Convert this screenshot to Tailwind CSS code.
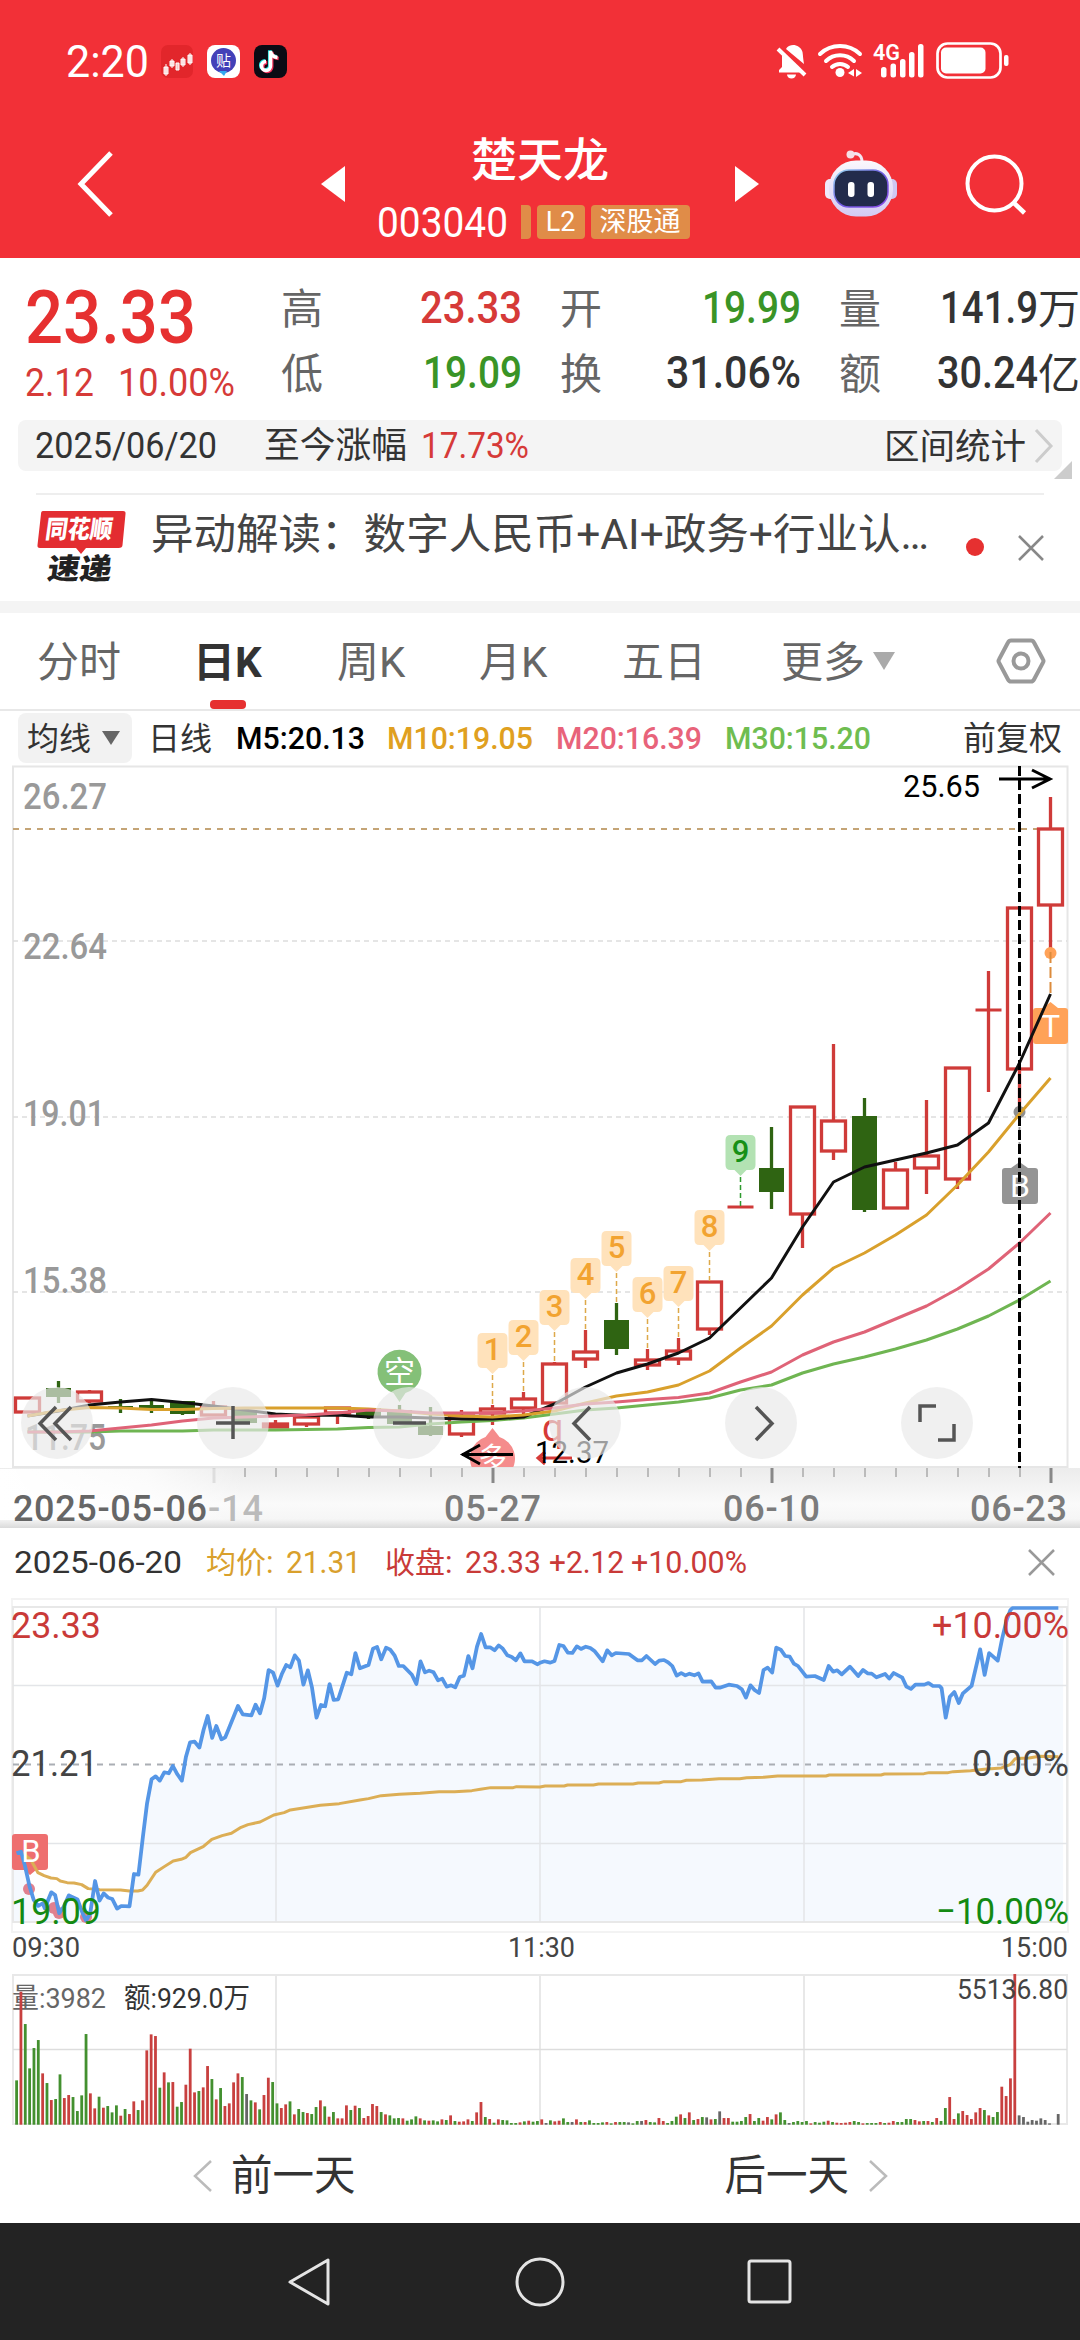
<!DOCTYPE html>
<html lang="zh-CN">
  <head>
    <meta charset="UTF-8" />
    <meta name="viewport" content="width=device-width, initial-scale=1.0" />
    <title>楚天龙 003040</title>
    <script src="https://cdn.jsdelivr.net/npm/@tailwindcss/browser@4"></script>
  </head>
  <body class="w-[1080px] h-[2340px] overflow-hidden flex flex-col bg-white text-[#333] font-['Roboto','Noto_Sans_CJK_SC',sans-serif] leading-none whitespace-nowrap">

    <!-- header -->
    <header class="h-[258px] shrink-0 bg-[#f23037] text-white">
      <div class="h-[122px] flex items-center pl-[66px] pr-[70px]">
        <span class="text-[45px]" data-w="83">2:20</span>
        <svg class="ml-3 w-[32px] h-[33px]" viewBox="0 0 32 33">
          <rect width="32" height="33" rx="7" fill="#e2262b" />
          <path d="M3 22h4v7H3zM9 16h4v5H9zM15 18h3v7h-3zM20 14h4v6h-4zM27 10h4v8h-4zM11 14v9M22 12v10M5 19v12M29 8v12" fill="#f6c9c9" stroke="#fff" stroke-width="1" />
        </svg>
        <svg class="ml-[14px] w-[33px] h-[33px]" viewBox="0 0 33 33">
          <rect width="33" height="33" rx="8" fill="#fff" />
          <circle cx="16.500" cy="15.500" r="12.500" fill="#4340b8" />
          <path d="M12 26l5 5 3-5z" fill="#35a9f0" />
          <text x="16.500" y="21" font-size="15" text-anchor="middle" fill="#fff">贴</text>
        </svg>
        <svg class="ml-[14px] w-[33px] h-[33px]" viewBox="0 0 33 33">
          <rect width="33" height="33" rx="8" fill="#0b0b14" />
          <g fill="none" stroke-width="3.500">
            <path d="M16.500 6v15a4.500 4.500 0 1 1-4.500-4.500M16.500 6c.5 4 3 6 7 6.500" stroke="#25e5e0" transform="translate(-.8 -.8)" />
            <path d="M16.500 6v15a4.500 4.500 0 1 1-4.500-4.500M16.500 6c.5 4 3 6 7 6.500" stroke="#f43059" transform="translate(1.200 1)" />
            <path d="M16.500 6v15a4.500 4.500 0 1 1-4.500-4.500M16.500 6c.5 4 3 6 7 6.500" stroke="#fff" />
          </g>
        </svg>
        <svg class="ml-auto w-[236px] h-[44px]" viewBox="774 38 236 44" fill="#fff">
          <!-- muted bell -->
          <path d="M779 71.500V69l3-3V54l20 17.500zM787 46.500c3-4 13-4 15.500 4.500.6 4 .6 7 1.500 12L786 48z" />
          <path d="M778 48l27 26" stroke="#fff" stroke-width="4" />
          <path d="M787 73.500h9a4.500 4 0 0 1-9 0z" />
          <!-- wifi -->
          <g fill="none" stroke="#fff" stroke-width="4" stroke-linecap="round">
            <path d="M820 53a29 29 0 0 1 40 0M826 60a20 20 0 0 1 28 0M832 66a12 12 0 0 1 16 0" />
          </g>
          <circle cx="840" cy="71.500" r="4.500" />
          <path d="M848 72l6-4v7.500zM856 68v8l6-4z" />
          <text x="873" y="59" font-size="22" font-weight="600" textLength="27" lengthAdjust="spacingAndGlyphs">4G</text>
          <rect x="881" y="66" width="5.500" height="10.500" rx="2.500" />
          <rect x="890.500" y="62.500" width="5.500" height="14" rx="2.500" />
          <rect x="900" y="58" width="5.500" height="18.500" rx="2.500" />
          <rect x="909" y="51" width="5.500" height="25.500" rx="2.500" />
          <rect x="918" y="43" width="5.500" height="33.500" rx="2.500" />
          <rect x="937.500" y="42.500" width="63" height="34" rx="10" fill="none" stroke="#fff" stroke-width="2.700" />
          <rect x="941" y="46.500" width="44.500" height="26" rx="5" />
          <rect x="1004" y="54" width="4.500" height="11" rx="2" />
        </svg>
      </div>
      <div class="h-[124px] flex items-center">
        <svg class="ml-[74px] w-[40px] h-[66px]" viewBox="0 0 40 66" fill="none" stroke="#fff" stroke-width="5"><path d="M37 2L7 33l30 31" /></svg>
        <svg class="ml-[207px] w-[24px] h-[36px]" viewBox="0 0 24 36" fill="#fff"><path d="M24 0v36L0 18z" /></svg>
        <div class="w-[390px] pt-[6px] flex flex-col items-center">
          <h1 class="text-[46px] h-[46px] mt-[2px] mb-[22px] font-medium">楚天龙</h1>
          <div class="h-[34px] flex items-center pr-[14px]">
            <span class="text-[42px] mr-[13px]" data-w="131">003040</span>
            <span class="w-[10px] h-[34px] bg-[#e08c48] rounded-r"></span>
            <span class="ml-[6px] h-[34px] w-[48px] bg-[#e08c48] rounded flex items-center justify-center text-[27px]">L2</span>
            <span class="ml-[6px] h-[34px] w-[99px] bg-[#e08c48] rounded flex items-center justify-center text-[27px]">深股通</span>
          </div>
        </div>
        <svg class="w-[24px] h-[36px]" viewBox="0 0 24 36" fill="#fff"><path d="M0 0v36l24-18z" /></svg>
        <svg class="ml-[63px] w-[78px] h-[70px]" viewBox="822 148 78 70">
          <defs>
            <linearGradient id="shell" x1="0" y1="0" x2="0" y2="1"><stop offset="0" stop-color="#fbf8fd" /><stop offset="1" stop-color="#d3caf3" /></linearGradient>
            <linearGradient id="rim" x1="0" y1="0" x2="1" y2="1"><stop offset="0" stop-color="#9adcf3" /><stop offset=".5" stop-color="#6f5be0" /><stop offset="1" stop-color="#8a4be8" /></linearGradient>
          </defs>
          <path d="M851 154c5-3 11-1 11 7" fill="none" stroke="#f3e6f2" stroke-width="3" />
          <circle cx="850.500" cy="153.500" r="4" fill="#f6dfe6" />
          <rect x="825" y="178" width="12" height="20" rx="5" fill="#efe9fb" />
          <rect x="885" y="178" width="12" height="20" rx="5" fill="#cfc8f2" />
          <rect x="829" y="159.500" width="64" height="56" rx="27" fill="url(#shell)" />
          <rect x="834" y="169" width="54" height="37" rx="15" fill="#222b4b" stroke="url(#rim)" stroke-width="1.500" />
          <rect x="848" y="181" width="6.500" height="15" rx="3" fill="#fff" />
          <rect x="867.500" y="181" width="6.500" height="15" rx="3" fill="#fff" />
        </svg>
        <svg class="ml-[64px] w-[64px] h-[64px]" viewBox="964 153 64 64" fill="none" stroke="#fff" stroke-width="4"><circle cx="994.500" cy="184.500" r="27" /><path d="M1013 203l11.500 11" stroke-width="4.500" /></svg>
      </div>
    </header>

    <!-- quote -->
    <section class="h-[162px] shrink-0 flex">
      <div class="w-[281px] shrink-0 pl-[25px] pt-[22px]">
        <div class="text-[75px] h-[76px] font-medium text-[#e63030]" data-w="171">23.33</div>
        <div class="mt-[7px] flex text-[39px] text-[#d63a38]">
          <span class="mr-[24px]" data-w="69">2.12</span>
          <span data-w="117">10.00%</span>
        </div>
      </div>
      <div class="flex gap-[38px] pt-[17px] text-[45px] font-medium">
        <div class="w-[241px]">
          <div class="h-[65px] flex items-center justify-between"><span class="text-[42px] font-normal text-[#666] mt-1">高</span><span class="text-[#d63a38]" data-w="102">23.33</span></div>
          <div class="h-[65px] flex items-center justify-between"><span class="text-[42px] font-normal text-[#666] mt-1">低</span><span class="text-[#3a9426]" data-w="99">19.09</span></div>
        </div>
        <div class="w-[241px]">
          <div class="h-[65px] flex items-center justify-between"><span class="text-[42px] font-normal text-[#666] mt-1">开</span><span class="text-[#3a9426]" data-w="99">19.99</span></div>
          <div class="h-[65px] flex items-center justify-between"><span class="text-[42px] font-normal text-[#666] mt-1">换</span><span data-w="135">31.06%</span></div>
        </div>
        <div class="w-[241px]">
          <div class="h-[65px] flex items-center justify-between"><span class="text-[42px] font-normal text-[#666] mt-1">量</span><span class="flex items-center"><span data-w="98">141.9</span><span class="text-[42px] font-normal mt-1">万</span></span></div>
          <div class="h-[65px] flex items-center justify-between"><span class="text-[42px] font-normal text-[#666] mt-1">额</span><span class="flex items-center"><span data-w="101">30.24</span><span class="text-[42px] font-normal mt-1">亿</span></span></div>
        </div>
      </div>
    </section>

    <!-- range strip -->
    <section class="relative h-[51px] shrink-0 mx-[18px] pl-[17px] pr-[8px] rounded-lg bg-[#f4f4f4] flex items-center text-[36px]">
      <span data-w="182">2025/06/20</span>
      <span class="ml-[47px]" data-w="143">至今涨幅</span>
      <span class="ml-[14px] text-[#d63a38]" data-w="108">17.73%</span>
      <span class="ml-auto text-[35.500px] mr-[8px] mt-1">区间统计</span>
      <svg class="w-[20px] h-[36px]" viewBox="0 0 20 36" fill="none" stroke="#ccc" stroke-width="3"><path d="M2 2l15 16L2 34" /></svg>
      <svg class="absolute -right-[10px] -bottom-[8px] w-[18px] h-[18px]" viewBox="0 0 18 18" fill="#ccc"><path d="M18 0v18H0z" /></svg>
    </section>

    <!-- news -->
    <section class="h-[108px] shrink-0 mx-[36px] mt-[22px] border-t-2 border-[#eee] flex">
      <svg class="w-[92px] h-[76px] mt-[15px]" viewBox="36 510 92 76">
        <path d="M43 511h80q3 0 2.500 3l-3 31q0 3-4 3H86l-5 6-5-6H40q-3 0-2.500-3l3.500-31q0-3 2-3z" fill="#e32d31" />
        <g font-weight="900" transform="skewX(-8)">
          <text x="120" y="538" font-size="25" textLength="67" lengthAdjust="spacingAndGlyphs" fill="#fff">同花顺</text>
          <text x="128" y="579" font-size="29" textLength="64" lengthAdjust="spacingAndGlyphs" fill="#222">速递</text>
        </g>
      </svg>
      <p class="ml-[23px] mt-[18px] w-[780px] text-[42px] text-[#444]" data-w="778">异动解读：数字人民币+AI+政务+行业认…</p>
      <span class="mt-[43px] ml-[35px] w-[18px] h-[18px] rounded-full bg-[#e63030]"></span>
      <svg class="mt-[40px] ml-auto w-[26px] h-[26px]" viewBox="0 0 26 26" stroke="#888" stroke-width="2.500"><path d="M1 1l24 24M25 1L1 25" /></svg>
    </section>
    <div class="h-[12px] shrink-0 bg-[#f4f4f4]"></div>

    <!-- tabs -->
    <nav class="h-[98px] shrink-0 border-b-2 border-[#e8e8e8] pl-[37px] pr-[34px] flex items-center text-[42px] text-[#666]">
      <span class="w-[156px] mt-1">分时</span>
      <span class="w-[144px] relative h-full flex items-center font-bold text-[#333]"><span class="mt-1">日K</span><i class="absolute left-[17px] bottom-0 w-[36px] h-[9px] rounded bg-[#e63030]"></i></span>
      <span class="w-[142px] mt-1">周K</span>
      <span class="w-[143px] mt-1">月K</span>
      <span class="w-[159px] mt-1">五日</span>
      <span class="mt-1">更多</span>
      <svg class="ml-[8px] w-[22px] h-[18px]" viewBox="0 0 22 18" fill="#aaa"><path d="M0 0h22L11 18z" /></svg>
      <svg class="ml-auto w-[50px] h-[46px]" viewBox="0 0 50 46" fill="none" stroke="#999" stroke-width="4"><path d="M15 2.500h20q2 0 3 2l9 17q1 1.500 0 3l-9 17q-1 2-3 2H15q-2 0-3-2l-9-17q-1-1.500 0-3l9-17q1-2 3-2z" /><circle cx="25" cy="23" r="7.500" /></svg>
    </nav>

    <!-- moving averages -->
    <section class="h-[53px] shrink-0 pl-[18px] pr-[18px] flex items-center text-[32px] font-medium">
      <div class="w-[114px] shrink-0 h-[50px] rounded-lg bg-[#f2f2f2] pl-[9px] flex items-center font-normal">
        <span class="mt-0.5">均线</span>
        <svg class="ml-[11px] w-[18px] h-[14px]" viewBox="0 0 18 14" fill="#666"><path d="M0 0h18L9 14z" /></svg>
      </div>
      <span class="ml-[16px] mt-0.5 font-normal">日线</span>
      <span class="ml-[24px] text-black" data-w="129">M5:20.13</span>
      <span class="ml-[22px] text-[#e0a020]" data-w="146">M10:19.05</span>
      <span class="ml-[23px] text-[#e8637a]" data-w="146">M20:16.39</span>
      <span class="ml-[23px] text-[#6fbd50]" data-w="146">M30:15.20</span>
      <span class="ml-auto mt-0.5 font-normal text-[33px]">前复权</span>
    </section>

    <!-- daily K -->
    <svg class="w-[1080px] h-[764px] shrink-0" viewBox="0 764 1080 764">
      <defs>
        <linearGradient id="axis" x1="0" y1="0" x2="0" y2="1"><stop offset="0" stop-color="#ececec" /><stop offset=".6" stop-color="#fafafa" /><stop offset=".85" stop-color="#f6f6f6" /><stop offset="1" stop-color="#dadada" /></linearGradient>
        <linearGradient id="fade"><stop offset="0" stop-color="#fff" /><stop offset=".6" stop-color="#fff" stop-opacity=".75" /><stop offset="1" stop-color="#fff" stop-opacity="0" /></linearGradient>
        <clipPath id="plot"><rect x="13" y="764" width="1067" height="703" /></clipPath>
      </defs>
      <rect y="1468" width="1080" height="60" fill="url(#axis)" />
      <rect x="13" y="766.500" width="1054.500" height="700.500" fill="none" stroke="#e6e6e6" stroke-width="2" />
      <path d="M13 941h1054M13 1117h1054M13 1292h1054" stroke="#ddd" stroke-width="1.300" stroke-dasharray="5 4" />
      <path d="M13 829h1025" stroke="#c4a476" stroke-width="2" stroke-dasharray="6 6" />
      <g fill="#999" font-size="36" font-weight="500">
        <text x="23" y="809" textLength="84" lengthAdjust="spacingAndGlyphs">26.27</text>
        <text x="23" y="959" textLength="84" lengthAdjust="spacingAndGlyphs">22.64</text>
        <text x="23" y="1126" textLength="82" lengthAdjust="spacingAndGlyphs">19.01</text>
        <text x="23" y="1293" textLength="84" lengthAdjust="spacingAndGlyphs">15.38</text>
        <text x="25" y="1450" textLength="81" lengthAdjust="spacingAndGlyphs">11.75</text>
      </g>
      <g id="candles"></g>

      <!-- T / B trade marks -->
      <circle cx="1050.500" cy="953" r="6" fill="#ffa258" />
      <path d="M1050.500 952v45" stroke="#dc8b3c" stroke-width="2" stroke-dasharray="11 4" />
      <path d="M1043 1008l7.500-6 7.500 6h7q3 0 3 3v30q0 3-3 3h-29q-3 0-3-3v-30q0-3 3-3z" fill="#ffa258" />
      <text x="1050.500" y="1037" font-size="32" text-anchor="middle" fill="#fff">T</text>
      <circle cx="1019.500" cy="1112" r="6" fill="#8f8f8f" />
      <path d="M1019.500 1112v50" stroke="#999" stroke-width="2" stroke-dasharray="11 4" />
      <path d="M1011 1168l8.500-6 8.500 6h7q3 0 3 3v30q0 3-3 3h-30q-3 0-3-3v-30q0-3 3-3z" fill="#949494" />
      <text x="1020" y="1197" font-size="32" text-anchor="middle" fill="#fff">B</text>

      <g id="averages" fill="none" stroke-width="3" stroke-linejoin="round"></g>
      <path d="M1019.500 766v702" stroke="#000" stroke-width="3" stroke-dasharray="10 4" />
      <text x="903" y="797" font-size="31" fill="#000" textLength="77" lengthAdjust="spacingAndGlyphs">25.65</text>
      <path d="M999 779h50M1032 770l18 9-18 9" fill="none" stroke="#000" stroke-width="3" />

      <!-- nine-turn numbers -->
      <g id="turns" font-size="31" font-weight="500" text-anchor="middle"></g>

      <!-- 空 / 多 balloons -->
      <g clip-path="url(#plot)">
        <path d="M399.500 1402l-6-9a22 22 0 1 1 12 0z" fill="#84c078" />
        <text x="399.500" y="1383" font-size="31" text-anchor="middle" fill="#fff">空</text>
        <path d="M492.500 1428l-7 9a22.500 22.500 0 1 0 14 0z" fill="#f58c8c" />
        <text x="492.500" y="1469" font-size="29" text-anchor="middle" fill="#fff">多</text>
        <path d="M513 1454.500h-51M480 1445l-17 9.500 17 9.500" fill="none" stroke="#000" stroke-width="3" />
        <text x="542" y="1441" font-size="38" fill="#d63a38">q</text>
        <path d="M572 1458h-34M545 1452l-7 6 7 6" fill="none" stroke="#d63a38" stroke-width="3" />
        <text x="535" y="1463" font-size="31" fill="#000" textLength="74" lengthAdjust="spacingAndGlyphs">12.37</text>
      </g>

      <!-- floating controls -->
      <g fill="#e9e9e9" fill-opacity=".67">
        <circle cx="57" cy="1423" r="36" />
        <circle cx="233" cy="1423" r="36" />
        <circle cx="409" cy="1423" r="36" />
        <circle cx="585" cy="1423" r="36" />
        <circle cx="761" cy="1423" r="36" />
        <circle cx="937" cy="1423" r="36" />
      </g>
      <g fill="none" stroke="#555" stroke-width="3.500">
        <path d="M56 1407l-16 16.500 16 16.500M71 1407l-16 16.500 16 16.500" />
        <path d="M216 1423h34M233 1406v33M393 1423h33" />
        <path d="M590 1407l-16 16.500 16 16.500M756 1407l16 16.500-16 16.500" />
        <path d="M920 1422v-16h16M954 1424v16h-16" />
      </g>

      <!-- date axis -->
      <g id="ticks"></g>
      <rect y="1469" width="245" height="51" fill="url(#fade)" />
      <g font-size="36" font-weight="500" fill="#7c7c7c">
        <text x="208" y="1521" fill="#bbb" textLength="55" lengthAdjust="spacing">-14</text>
        <text x="13" y="1521" fill="#666" textLength="194" lengthAdjust="spacing">2025-05-06</text>
        <text x="444" y="1521" textLength="97" lengthAdjust="spacing">05-27</text>
        <text x="723" y="1521" textLength="97" lengthAdjust="spacing">06-10</text>
        <text x="970" y="1521" textLength="97" lengthAdjust="spacing">06-23</text>
      </g>
    </svg>

    <!-- intraday -->
    <section class="h-[69px] shrink-0 pl-[14px] pr-[25px] flex items-center text-[31px]">
      <span data-w="168">2025-06-20</span>
      <span class="ml-[24px] flex items-center text-[#d9a02c]"><span class="text-[30px]">均价</span><span class="w-[20px]">:</span><span data-w="75">21.31</span></span>
      <span class="ml-[24px] flex items-center text-[#c93a38]"><span class="text-[30px]">收盘</span><span class="w-[20px]">:</span><span data-w="76">23.33</span><span class="ml-[8px]" data-w="75">+2.12</span><span class="ml-[7px]" data-w="116">+10.00%</span></span>
      <svg class="ml-auto w-[27px] h-[27px]" viewBox="0 0 27 27" stroke="#999" stroke-width="2.500"><path d="M1 1l25 25M26 1L1 26" /></svg>
    </section>

    <svg class="w-[1080px] h-[538px] shrink-0" viewBox="0 1597 1080 538">
      <rect x="12" y="1599" width="1056" height="333" fill="none" stroke="#f3f3f3" stroke-width="2" />
      <path id="area" fill="#f5f9fe" transform="translate(0 1530) scale(.3444 .3333)" />
      <rect x="13" y="1607" width="1054" height="315" fill="none" stroke="#e8e8e8" stroke-width="2" />
      <path d="M13 1685.500h1054M13 1843.500h1054M276 1607v315M540 1607v315M804 1607v315" fill="none" stroke="#e3e5e8" stroke-width="1.500" />
      <path d="M13 1764.500h1054" stroke="#aaaeb4" stroke-width="2" stroke-dasharray="6 6" />
      <path d="M15 1834h30q3 0 3 3v30q0 3-3 3h-9l-6 5-6-5h-9q-3 0-3-3v-30q0-3 3-3z" fill="#ee6f6f" />
      <g fill="#e0808f"><circle cx="29" cy="1889" r="6" /><circle cx="54" cy="1908" r="6" /><circle cx="59" cy="1913" r="6" /><circle cx="86" cy="1917" r="6" /></g>
      <g transform="translate(0 1530) scale(.3444 .3333)" fill="none" stroke-width="11" stroke-linejoin="round">
        <path id="avg" stroke="#dcae55" stroke-width="9" />
        <path id="price" stroke="#5596e6" />
      </g>
      <text x="31" y="1862" font-size="31" text-anchor="middle" fill="#fff">B</text>
      <g font-size="37">
        <text x="11" y="1638" fill="#c93a38" textLength="90" lengthAdjust="spacingAndGlyphs">23.33</text>
        <text x="11" y="1776" fill="#444" textLength="87" lengthAdjust="spacingAndGlyphs">21.21</text>
        <text x="11" y="1924" fill="#138a13" textLength="90" lengthAdjust="spacingAndGlyphs">19.09</text>
        <text x="932" y="1638" fill="#c93a38" textLength="137" lengthAdjust="spacingAndGlyphs">+10.00%</text>
        <text x="972" y="1776" fill="#444" textLength="97" lengthAdjust="spacingAndGlyphs">0.00%</text>
        <text x="936" y="1924" fill="#138a13" textLength="133" lengthAdjust="spacingAndGlyphs">−10.00%</text>
      </g>
      <g font-size="28" fill="#444">
        <text x="12" y="1957" textLength="68" lengthAdjust="spacingAndGlyphs">09:30</text>
        <text x="508" y="1957" textLength="67" lengthAdjust="spacingAndGlyphs">11:30</text>
        <text x="1001" y="1957" textLength="67" lengthAdjust="spacingAndGlyphs">15:00</text>
      </g>
      <path d="M13 1975h1054v149H13zM276 1975v149M540 1975v149M804 1975v149" fill="none" stroke="#e8e8e8" stroke-width="2" />
      <path d="M13 2049.500h1054" stroke="#ddd" stroke-width="1.500" />
      <g font-size="28">
        <text x="12" y="2008" fill="#666" textLength="94" lengthAdjust="spacingAndGlyphs">量:3982</text>
        <text x="124" y="2008" fill="#333" textLength="126" lengthAdjust="spacingAndGlyphs">额:929.0万</text>
      </g>
      <g id="volume"></g>
      <text x="957" y="1999" font-size="28" fill="#444" textLength="111" lengthAdjust="spacingAndGlyphs">55136.80</text>
    </svg>

    <!-- day switch -->
    <section class="h-[88px] shrink-0 pl-[193px] pr-[192px] pb-[7px] flex items-center text-[41.500px]">
      <svg class="w-[20px] h-[34px]" viewBox="0 0 20 34" fill="none" stroke="#bbb" stroke-width="2.500"><path d="M18 2L2 17l16 15" /></svg>
      <span class="ml-[18px]">前一天</span>
      <span class="ml-auto">后一天</span>
      <svg class="ml-[19px] w-[20px] h-[34px]" viewBox="0 0 20 34" fill="none" stroke="#bbb" stroke-width="2.500"><path d="M2 2l16 15L2 32" /></svg>
    </section>

    <!-- system navigation -->
    <footer class="h-[117px] shrink-0 bg-[#232323]">
      <svg class="w-[1080px] h-[117px]" viewBox="0 2223 1080 117" fill="none" stroke="#e4e4e4" stroke-width="3"><path d="M290 2282l38-22v44z" stroke-linejoin="round" /><circle cx="540" cy="2282" r="23" /><rect x="749" y="2261" width="41" height="41" rx="2" /></svg>
    </footer>
  </body>
  <script>
    // squeeze digits to the width of the condensed quote face
    document.querySelectorAll("[data-w]").forEach((el) => {
      const w = el.dataset.w;
      el.innerHTML = `<svg class="block shrink-0 h-[1em] overflow-visible" style="width:${w}px"><text y=".845em" fill="currentColor" textLength="${w}" lengthAdjust="spacingAndGlyphs">${el.textContent}</text></svg>`;
    });

    const RED = "#cf3b39", GREEN = "#2f6412";
    const cx = (i) => 27.5 + 31 * i;

    // type, wick top, body top, body bottom, wick bottom
    const candles = [
      ["r", 1398, 1398, 1412, 1412], ["g", 1381, 1388, 1397, 1403], ["r", 1390, 1392, 1401, 1403],
      ["g", 1399, 1406, 1408, 1413], ["g", 1401, 1405, 1408, 1413], ["g", 1401, 1401, 1414, 1415],
      ["r", 1401, 1407, 1415, 1415], ["g", 1410, 1410, 1423, 1423], ["r", 1420, 1424, 1427, 1428],
      ["r", 1417, 1417, 1424, 1427], ["r", 1407, 1408, 1413, 1424], ["g", 1408, 1408, 1417, 1419],
      ["g", 1405, 1410, 1424, 1424], ["g", 1407, 1426, 1435, 1436], ["r", 1410, 1416, 1434, 1437],
      ["r", 1405, 1409, 1413, 1425], ["r", 1392, 1399, 1408, 1414], ["r", 1362, 1364, 1403, 1403],
      ["r", 1330, 1352, 1359, 1368], ["g", 1303, 1320, 1349, 1355], ["r", 1349, 1360, 1365, 1370],
      ["r", 1338, 1351, 1359, 1365], ["r", 1282, 1282, 1329, 1335], ["d", 1206, 1206, 1208, 1208],
      ["g", 1127, 1168, 1192, 1209], ["r", 1107, 1107, 1214, 1248], ["r", 1044, 1121, 1151, 1160],
      ["g", 1098, 1116, 1210, 1212], ["r", 1162, 1170, 1208, 1208], ["r", 1100, 1156, 1168, 1194],
      ["r", 1068, 1068, 1179, 1189], ["d", 971, 1009, 1011, 1092], ["r", 908, 908, 1069, 1110],
      ["r", 797, 829, 905, 952],
    ];
    let svg = "";
    candles.forEach(([type, high, top, bottom, low], i) => {
      const x = cx(i);
      const color = type == "g" ? GREEN : RED;
      if (type == "r") {
        svg += `<path d="M${x} ${high}V${top}M${x} ${bottom}V${low}" stroke="${color}" stroke-width="3.3"/>`;
        svg += `<rect x="${x - 12}" y="${top}" width="24" height="${bottom - top}" fill="none" stroke="${color}" stroke-width="3.3"/>`;
      } else {
        svg += `<path d="M${x} ${high}V${low}" stroke="${color}" stroke-width="3.3"/>`;
        svg += `<rect x="${x - 12.5}" y="${top}" width="25" height="${bottom - top}" fill="${color}" stroke="${type == "d" ? color : "none"}"/>`;
      }
    });
    document.getElementById("candles").innerHTML = svg;

    const averages = {
      "#6fb552": [1432,1432,1432,1431,1431,1431,1430,1430,1430,1429.5,1429,1427.5,1427,1424,1422,1420.5,1418,1414,1410,1408,1405,1402,1398,1390,1385,1373,1364,1357,1349,1340,1329,1316,1300,1281],
      "#111": [1416,1411,1405,1402,1399.5,1402.5,1406,1410,1414,1415.5,1415,1417,1417,1418,1419,1419,1417,1404,1387,1373,1364,1353,1338,1308,1278,1227,1182,1167,1160,1153,1145,1123,1063,994],
      "#d9a02c": [1416,1410.5,1407.5,1408,1409.5,1409.5,1408.5,1408,1408,1408,1408,1409,1411,1414,1416,1417,1415,1411,1403,1396,1392,1385,1371,1348,1326,1295,1268,1253,1235,1215,1185,1152,1114,1078],
      "#df6377": [1432,1432,1431,1428,1425,1421,1418,1417,1416,1415,1413,1410,1411,1413,1413,1413,1411,1408,1404,1402,1399.5,1397.5,1393,1382,1372,1355,1342,1332,1319,1306,1289,1269,1243,1213],
    };
    svg = "";
    for (const color in averages) {
      svg += `<polyline stroke="${color}" points="${averages[color].map((y, i) => cx(i) + "," + y).join(" ")}"/>`;
    }
    document.getElementById("averages").innerHTML = svg;

    // candle index, badge top, end of the leader
    const turns = [[15, 1333, 1405], [16, 1320, 1392], [17, 1290, 1362], [18, 1258, 1330], [19, 1231, 1303], [20, 1277, 1349], [21, 1266, 1338], [22, 1210, 1281], [23, 1135, 1206]];
    svg = "";
    turns.forEach(([i, y, end], n) => {
      const x = cx(i);
      const last = n == 8;
      svg += `<path d="M${x} ${y + 42}V${end}" stroke="${last ? "#2f9a2f" : "#dda94a"}" stroke-width="1.500" stroke-dasharray="5 3"/>`;
      svg += `<path d="M${x - 10} ${y}h20q5 0 5 5v25q0 5-5 5h-4l-6 6-6-6h-4q-5 0-5-5v-25q0-5 5-5z" fill="${last ? "#b3e2b3" : "#ffe2bb"}"/>`;
      svg += `<text x="${x}" y="${y + 27}" fill="${last ? "#169016" : "#f2a330"}">${n + 1}</text>`;
    });
    document.getElementById("turns").innerHTML = svg;

    svg = "";
    for (let i = 6; i < 34; i++) {
      const big = i == 6 || i == 15 || i == 24 || i == 33;
      const color = i == 6 ? "#d4d4d4" : big ? "#888" : "#bbb";
      svg += `<path d="M${cx(i) + 0.5} 1468v${big ? 15 : 9}" stroke="${color}" stroke-width="${big ? 3 : 2}"/>`;
    }
    document.getElementById("ticks").innerHTML = svg;

    // price, split at the noon break
    const morning = "48,970 61,965 73,1010 86,1070 98,1110 111,1128 124,1120 130,1135 149,1087 160,1095 172,1150 185,1130 200,1096 225,1108 240,1150 250,1172 262,1150 276,1053 289,1112 301,1090 314,1103 326,1107 340,1136 352,1128 376,1129 389,1032 402,1034 415,920 427,820 440,748 452,739 464,752 477,727 490,730 502,708 515,733 528,752 540,680 552,637 565,635 579,653 591,600 603,558 616,624 628,588 643,628 654,622 691,528 705,553 730,556 742,524 755,550 767,505 780,420 793,428 806,467 818,433 831,405 843,412 856,376 868,392 881,464 894,421 906,473 919,563 932,525 944,529 957,462 969,510 982,508 1007,428 1020,433 1032,369 1045,415 1070,405 1083,356 1095,351 1107,388 1121,353 1133,359 1146,377 1158,408 1171,408 1196,434 1209,462 1221,394 1234,427 1246,422 1259,427 1272,451 1284,446 1297,470 1310,466 1322,472 1335,441 1347,437 1360,378 1372,415 1385,350 1397,312 1410,352 1423,352 1436,361 1448,346 1460,356 1473,376 1486,381 1498,391 1511,370 1523,394 1545,394 1561,403";
    const afternoon = "0,398 13,394 30,398 42,393 56,345 68,348 81,368 94,369 107,349 119,357 133,350 146,354 158,363 182,394 195,361 208,376 220,369 258,372 283,391 296,391 309,378 334,402 346,392 360,390 372,397 384,408 397,437 410,429 422,436 434,431 448,436 460,430 472,455 497,454 510,473 522,473 548,464 572,468 586,478 598,503 611,466 623,480 636,489 649,420 661,413 674,428 686,353 699,359 712,378 725,380 737,401 749,408 773,440 798,438 824,450 838,408 851,425 863,421 876,433 900,410 924,438 938,420 951,430 963,431 977,442 1002,432 1014,446 1027,429 1052,443 1064,470 1077,477 1090,464 1116,464 1128,459 1141,468 1160,468 1166,475 1178,563 1190,500 1203,486 1216,519 1228,490 1253,468 1278,358 1291,435 1304,369 1329,392 1342,325 1355,270 1366,240 1372,234 1505,234";
    const avgMorning = "61,965 90,990 110,1028 128,1037 148,1044 165,1046 175,1053 195,1058 215,1059 237,1064 256,1076 290,1079 350,1080 376,1083 400,1083 414,1080 427,1066 452,1027 477,1010 503,993 526,988 540,982 553,968 590,950 615,928 645,917 672,910 700,892 720,884 755,876 795,855 825,848 843,840 880,834 930,826 985,821 1045,810 1070,806 1107,797 1160,793 1220,790 1275,785 1320,785 1370,782 1395,778 1425,773 1490,773 1500,770";
    const avgAfternoon = "0,771 15,768 70,768 80,765 155,765 170,762 270,762 285,759 345,759 360,755 410,755 425,751 470,750 520,746 580,746 600,743 650,742 690,738 830,738 840,735 990,735 1000,732 1115,731 1130,728 1185,728 1200,725 1250,722 1290,718 1340,714 1365,704 1380,686 1420,684 1450,679 1505,680";
    const shift = (s) => s.split(" ").map((p) => p.split(",")).map(([x, y]) => Number(x) + 1568 + "," + y).join(" ");
    const price = "M" + morning + " " + shift(afternoon);
    document.getElementById("price").setAttribute("d", price);
    document.getElementById("avg").setAttribute("d", "M" + avgMorning + " " + shift(avgAfternoon));
    document.getElementById("area").setAttribute("d", price + " 3087,234 3087,1176 38,1176 38,970z");

    // one bar per minute, value is the top edge in thirds of a pixel
    const volume = "g481 r215 g312 g445 g384 g360 r460 g489 r540 g537 g463 r534 r525 g531 g573 g526 g342 r520 r565 g530 r563 g558 g577 g556 r587 g567 r582 r544 g570 r541 r391 r343 r348 g503 r457 g487 r486 g560 g546 r494 r386 r517 g513 r502 r438 g477 r538 g504 r558 r550 r487 r460 g471 k522 g541 r547 g568 r525 r473 g486 g550 r564 r553 g544 r583 g567 g576 r579 g582 g561 r541 g559 r590 g576 r595 r595 r556 g570 r557 g564 r594 r588 r552 r558 g576 r583 g586 g595 g594 r595 g602 g598 g589 r595 g601 r602 g601 g604 r598 g600 r586 g603 r605 r604 r598 g603 r577 r546 g591 r597 g608 r598 g600 g601 g609 g609 r607 g604 r602 g605 g603 r598 k609 g601 r604 r602 g595 g606 k606 r598 g606 r606 g601 g609 g609 g607 r606 g610 r606 g606 g606 k607 g610 g603 k603 r600 g606 g607 r594 r603 g609 g603 g590 r583 g594 r577 g600 r597 g591 k592 r598 g597 k574 r594 r594 g605 g605 g603 g591 r582 g603 g594 r602 r591 g598 r583 g577 g600 k609 g606 g603 g606 g603 r610 g606 g608 g605 r602 g606 r608 r609 r608 r606 g603 g606 r610 g609 g609 g609 r606 g609 r608 r603 g606 g606 g597 g597 r600 r604 g603 r603 g606 r594 g603 g564 r531 r597 g580 r573 r585 r597 r577 r564 g570 r586 g591 g576 r500 r528 r475 r162 k586 k591 k605 k600 k602 k595 k600 k610 k614 k582";
    const colors = { r: "#c8403f", g: "#43902f", k: "#666" };
    svg = "";
    volume.split(" ").forEach((bar, i) => {
      const h = (614 - Number(bar.slice(1))) / 3;
      svg += `<rect x="${15.2 + i * 4.34}" y="${2124.7 - h}" width="2.800" height="${h}" fill="${colors[bar[0]]}"/>`;
    });
    document.getElementById("volume").innerHTML = svg;
  </script>
</html>
